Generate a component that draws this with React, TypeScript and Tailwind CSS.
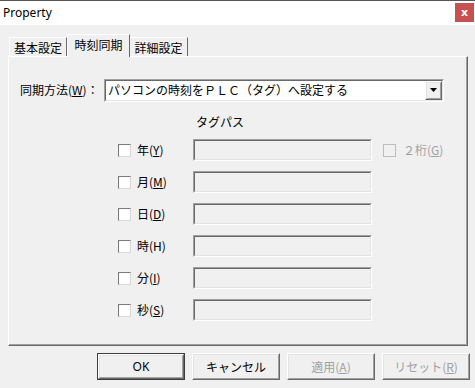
import React from "react";

const Sunken = ({ className = "", children }: { className?: string; children?: React.ReactNode }) => (
  <div className={`border border-t-[#a0a0a0] border-l-[#a0a0a0] border-r-white border-b-white ${className}`}>
    <div className="h-full w-full border border-t-[#696969] border-l-[#696969] border-r-[#e3e3e3] border-b-[#e3e3e3]">
      {children}
    </div>
  </div>
);

const Raised = ({ className = "", children }: { className?: string; children?: React.ReactNode }) => (
  <div className={`border border-t-white border-l-white border-r-[#696969] border-b-[#696969] ${className}`}>
    <div className="flex h-full w-full items-center justify-center border border-t-[#e3e3e3] border-l-[#e3e3e3] border-r-[#a0a0a0] border-b-[#a0a0a0]">
      {children}
    </div>
  </div>
);

const CheckBox = ({ disabled = false }: { disabled?: boolean }) => (
  <div
    className={`h-[13px] w-[13px] border ${
      disabled ? "border-[#bcbcbc] bg-[#f0f0f0]" : "border-t-[#7a7a7a] border-l-[#7a7a7a] border-r-[#d8d8d8] border-b-[#d8d8d8] bg-white"
    }`}
  />
);

const rows = [
  { label: "年", key: "Y", u: true },
  { label: "月", key: "M", u: true },
  { label: "日", key: "D", u: true },
  { label: "時", key: "H", u: false },
  { label: "分", key: "I", u: true },
  { label: "秒", key: "S", u: true },
];

export default function App() {
  return (
    <div className="h-[388px] w-[475px] overflow-hidden bg-[#f0f0f0] font-['Noto_Sans_CJK_JP',sans-serif] text-[12px] leading-none text-black">
      {/* Title bar */}
      <div className="flex h-[25px] items-start justify-between border-t border-[#555555] bg-white">
        <span className="mt-[6px] ml-[3px] font-['Noto_Sans',sans-serif] text-[12px]">Property</span>
        <div className="mt-[2px] mr-[1px] flex h-[19px] w-[19px] items-center justify-center bg-[#c75050] font-['DejaVu_Sans',sans-serif] text-[11px] font-bold text-white">
          x
        </div>
      </div>

      {/* Tabs */}
      <div className="flex h-[31px] items-end pl-[9px]">
        <div className="flex h-[19px] w-[58px] items-center justify-center border-t border-l border-r border-t-white border-l-white border-r-[#696969] pt-[1px]">
          基本設定
        </div>
        <div className="relative z-10 -mb-px flex h-[23px] w-[63px] items-center justify-center border-t border-l border-r border-t-white border-l-white border-r-[#696969] bg-[#f0f0f0] pb-[2px]">
          時刻同期
        </div>
        <div className="flex h-[19px] w-[58px] items-center justify-center border-t border-r border-t-white border-r-[#696969] pt-[1px]">
          詳細設定
        </div>
      </div>

      {/* Panel */}
      <div className="ml-[8px] h-[290px] w-[460px] border border-t-white border-l-white border-r-[#696969] border-b-[#696969]">
        <div className="h-full w-full border-r border-b border-r-[#a0a0a0] border-b-[#a0a0a0] pt-[22px] pl-[11px]">
          <div className="flex h-[22px] items-center">
            <span className="w-[84px]">
              同期方法(<span className="underline">W</span>)：
            </span>
            <Sunken className="h-[23px] w-[340px] bg-white">
              <div className="flex h-full items-center justify-between">
                <span className="pl-[2px]">パソコンの時刻をＰＬＣ（タグ）へ設定する</span>
                <Raised className="h-[19px] w-[17px] bg-[#f0f0f0]">
                  <svg width="7" height="4" viewBox="0 0 7 4">
                    <path d="M0 0h7L3.5 4z" fill="#000" />
                  </svg>
                </Raised>
              </div>
            </Sunken>
          </div>

          <div className="mt-[15px] ml-[176px] h-[16px]">タグパス</div>

          <div className="mt-[7px] flex flex-col gap-[10px]">
            {rows.map((r, i) => (
              <div key={r.key} className="flex h-[22px] items-center">
                <div className="ml-[98px]">
                  <CheckBox />
                </div>
                <span className="w-[62px] pl-[6px]">
                  {r.label}(<span className={r.u ? "underline" : ""}>{r.key}</span>)
                </span>
                <Sunken className="h-[22px] w-[179px] bg-[#f0f0f0]" />
                {i === 0 && (
                  <>
                    <div className="ml-[11px]">
                      <CheckBox disabled />
                    </div>
                    <span className="ml-[7px] text-[#a0a0a0]">
                      ２桁(<span className="underline">G</span>)
                    </span>
                  </>
                )}
              </div>
            ))}
          </div>
        </div>
      </div>

      {/* Buttons */}
      <div className="mt-[7px] flex gap-[7px] pl-[97px]">
        <div className="h-[27px] w-[88px] border border-[#3c3c3c]">
          <Raised className="h-full w-full">
            <span className="font-['Noto_Sans',sans-serif]">OK</span>
          </Raised>
        </div>
        <Raised className="h-[27px] w-[88px]">キャンセル</Raised>
        <Raised className="h-[27px] w-[88px]">
          <span className="text-[#a0a0a0]">
            適用(<span className="underline">A</span>)
          </span>
        </Raised>
        <Raised className="h-[27px] w-[88px]">
          <span className="text-[#a0a0a0]">
            リセット(<span className="underline">R</span>)
          </span>
        </Raised>
      </div>
    </div>
  );
}
